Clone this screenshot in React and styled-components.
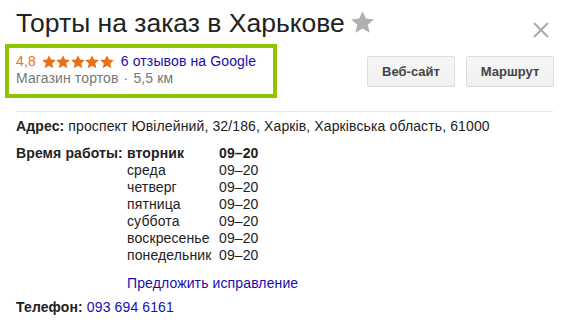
import React from 'react';
import styled, { createGlobalStyle } from 'styled-components';

const GlobalStyle = createGlobalStyle`
    html, body {
        margin: 0;
        padding: 0;
        background: #fff;
    }
    body {
        font-family: "Liberation Sans", Arial, sans-serif;
        font-size: 14px;
        letter-spacing: 0.12px;
        color: #222;
    }
`;

const Card = styled.div`
    position: relative;
    width: 567px;
    height: 326px;
    box-sizing: border-box;
    padding: 8px 14px 0 16px;
    background: #fff;
    overflow: hidden;
`;

const Title = styled.h1`
    display: flex;
    align-items: center;
    gap: 6px;
    margin: 0;
    font-size: 26.5px;
    letter-spacing: 0;
    line-height: 30px;
    font-weight: normal;
    color: #222;
    white-space: nowrap;
    svg {
        display: block;
        margin-top: -2px;
    }
`;

const CloseButton = styled.button`
    position: absolute;
    top: 22px;
    right: 18px;
    width: 16px;
    height: 16px;
    padding: 0;
    border: 0;
    background: transparent;
    cursor: pointer;
    svg {
        display: block;
    }
`;

const Summary = styled.div`
    display: flex;
    align-items: center;
    justify-content: space-between;
    margin-top: 6px;
    padding-bottom: 13px;
    border-bottom: 1px solid #e6e6e6;
`;

const Highlight = styled.div`
    margin-left: -11px;
    width: 272px;
    box-sizing: border-box;
    padding: 5px 7px 7px 7px;
    border: 4px solid #8fc400;
`;

const RatingRow = styled.div`
    display: flex;
    align-items: center;
    line-height: 17px;
    white-space: nowrap;
`;

const Score = styled.span`
    color: #e7711b;
`;

const Stars = styled.span`
    display: inline-flex;
    gap: 0.5px;
    margin: 0 7px 0 6px;
    svg {
        display: block;
    }
`;

const Link = styled.a`
    color: #1a0dab;
    text-decoration: none;
    cursor: pointer;
`;

const Subline = styled.div`
    line-height: 17px;
    color: #777;
    white-space: nowrap;
`;

const Dot = styled.span`
    margin: 0 5px;
`;

const Actions = styled.div`
    display: flex;
    gap: 11px;
    margin-right: -1px;
    margin-top: 1px;
`;

const Button = styled.button`
    width: 88px;
    height: 31px;
    padding: 0;
    border: 1px solid #dcdcdc;
    border-radius: 2px;
    background: linear-gradient(#f6f6f6, #f1f1f1);
    font-family: inherit;
    font-size: 13px;
    font-weight: bold;
    color: #444;
    cursor: pointer;
`;

const Section = styled.div`
    margin-top: ${(p) => p.$top}px;
    line-height: 17px;
    white-space: nowrap;
`;

const Label = styled.b`
    font-weight: bold;
    color: #222;
`;

const Value = styled.span`
    color: #222;
`;

const Hours = styled.div`
    display: grid;
    grid-template-columns: 111px 92px auto;
    margin-top: 10px;
    line-height: 17px;
`;

const Cell = styled.div`
    grid-column: ${(p) => p.$col};
    font-weight: ${(p) => (p.$bold ? 'bold' : 'normal')};
    white-space: nowrap;
`;

const Suggest = styled.div`
    grid-column: 2 / 4;
    margin-top: 11px;
`;

const STAR = 'M12 2.2l2.9 6.4 7 .7-5.3 4.7 1.6 6.9L12 17.3l-6.2 3.6 1.6-6.9L2.1 9.3l7-.7z';

function Star({ width, color }) {
    return (
        <svg width={width} height={width * 0.95} viewBox="2 2 20 19">
            <path d={STAR} fill={color} />
        </svg>
    );
}

const schedule = [
    ['вторник', '09–20'],
    ['среда', '09–20'],
    ['четверг', '09–20'],
    ['пятница', '09–20'],
    ['суббота', '09–20'],
    ['воскресенье', '09–20'],
    ['понедельник', '09–20'],
];

export default function App() {
    return (
        <>
            <GlobalStyle />
            <Card>
                <Title>
                    Торты на заказ в Харькове
                    <Star width={23} color="#b0b0b0" />
                </Title>
                <CloseButton aria-label="Закрыть">
                    <svg width="16" height="16" viewBox="0 0 16 16">
                        <path d="M1 1L15 15M15 1L1 15" stroke="#aaa" strokeWidth="2" />
                    </svg>
                </CloseButton>

                <Summary>
                    <Highlight>
                        <RatingRow>
                            <Score>4,8</Score>
                            <Stars>
                                {[0, 1, 2, 3, 4].map((i) => (
                                    <Star key={i} width={14} color="#e7711b" />
                                ))}
                            </Stars>
                            <Link>6 отзывов на Google</Link>
                        </RatingRow>
                        <Subline>
                            Магазин тортов<Dot>·</Dot>5,5 км
                        </Subline>
                    </Highlight>
                    <Actions>
                        <Button>Веб-сайт</Button>
                        <Button>Маршрут</Button>
                    </Actions>
                </Summary>

                <Section $top={6}>
                    <Label>Адрес: </Label>
                    <Value>проспект Ювілейний, 32/186, Харків, Харківська область, 61000</Value>
                </Section>

                <Hours>
                    <Cell $col={1} $bold>Время работы:</Cell>
                    {schedule.map(([day, time], i) => (
                        <React.Fragment key={day}>
                            <Cell $col={2} $bold={i === 0}>{day}</Cell>
                            <Cell $col={3} $bold={i === 0}>{time}</Cell>
                        </React.Fragment>
                    ))}
                    <Suggest>
                        <Link>Предложить исправление</Link>
                    </Suggest>
                </Hours>

                <Section $top={7}>
                    <Label>Телефон: </Label>
                    <Link>093 694 6161</Link>
                </Section>
            </Card>
        </>
    );
}
